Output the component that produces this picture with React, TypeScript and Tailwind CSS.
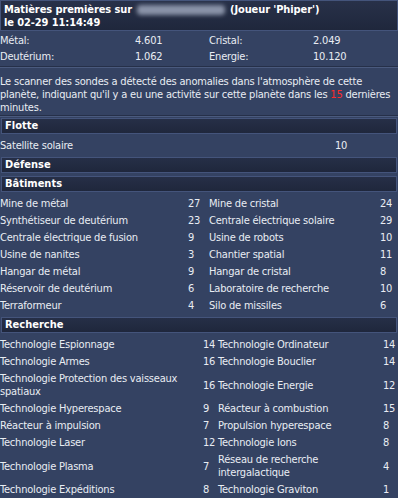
import React from 'react'

type Cell = { name: string; value: string }

const resources = [
  { a: 'Métal:', av: '4.601', b: 'Cristal:', bv: '2.049' },
  { a: 'Deutérium:', av: '1.062', b: 'Energie:', bv: '10.120' },
]

const buildings: Cell[][] = [
  [{ name: 'Mine de métal', value: '27' }, { name: 'Mine de cristal', value: '24' }],
  [{ name: 'Synthétiseur de deutérium', value: '23' }, { name: 'Centrale électrique solaire', value: '29' }],
  [{ name: 'Centrale électrique de fusion', value: '9' }, { name: 'Usine de robots', value: '10' }],
  [{ name: 'Usine de nanites', value: '3' }, { name: 'Chantier spatial', value: '11' }],
  [{ name: 'Hangar de métal', value: '9' }, { name: 'Hangar de cristal', value: '8' }],
  [{ name: 'Réservoir de deutérium', value: '6' }, { name: 'Laboratoire de recherche', value: '10' }],
  [{ name: 'Terraformeur', value: '4' }, { name: 'Silo de missiles', value: '6' }],
]

const research: Cell[][] = [
  [{ name: 'Technologie Espionnage', value: '14' }, { name: 'Technologie Ordinateur', value: '14' }],
  [{ name: 'Technologie Armes', value: '16' }, { name: 'Technologie Bouclier', value: '14' }],
  [{ name: 'Technologie Protection des vaisseaux spatiaux', value: '16' }, { name: 'Technologie Energie', value: '12' }],
  [{ name: 'Technologie Hyperespace', value: '9' }, { name: 'Réacteur à combustion', value: '15' }],
  [{ name: 'Réacteur à impulsion', value: '7' }, { name: 'Propulsion hyperespace', value: '8' }],
  [{ name: 'Technologie Laser', value: '12' }, { name: 'Technologie Ions', value: '8' }],
  [{ name: 'Technologie Plasma', value: '7' }, { name: 'Réseau de recherche intergalactique', value: '4' }],
  [{ name: 'Technologie Expéditions', value: '8' }, { name: 'Technologie Graviton', value: '1' }],
]

function SectionHead({ title, first }: { title: string; first?: boolean }) {
  return (
    <div
      className={`mx-[1px] mb-[3px] h-[16px] border border-[#44547b] bg-gradient-to-b from-[#262f47] to-[#1f273c] px-[3px] text-[11px] font-bold leading-[14px] tracking-normal text-white ${
        first ? 'mt-[1px]' : 'mt-[3px]'
      }`}
    >
      {title}
    </div>
  )
}

// bevelled rule between the report blocks
function Rule() {
  return <div className="h-[2px] border-t border-b border-t-[#263049] border-b-[#4a5a7e]" />
}

function StatGrid({ rows, cols }: { rows: Cell[][]; cols: string }) {
  return (
    <div className={`grid ${cols} items-center`}>
      {rows.map((r, i) => (
        <React.Fragment key={i}>
          <div className="py-[2px] leading-[13px]">{r[0].name}</div>
          <div className="py-[2px] leading-[13px]">{r[0].value}</div>
          <div className="py-[2px] leading-[13px]">{r[1].name}</div>
          <div className="py-[2px] leading-[13px]">{r[1].value}</div>
        </React.Fragment>
      ))}
    </div>
  )
}

export default function App() {
  return (
    <div
      className="h-[498px] w-[398px] overflow-hidden bg-[#344262] text-[11px] tracking-[-0.2px] text-[#e9edf3]"
      style={{ fontFamily: 'Tahoma, "DejaVu Sans Condensed", "DejaVu Sans", sans-serif' }}
    >
      {/* report title */}
      <div className="h-[31px] border border-[#44547b] bg-gradient-to-b from-[#283149] to-[#1f273c] px-[3px] pt-[2px] text-[11px] font-bold leading-[13px] tracking-[-0.1px] text-white">
        <div className="flex items-center">
          <span>Matières premières sur</span>
          <span className="ml-[5px] mr-[5px] inline-block h-[10px] w-[88px] rounded-sm bg-[#8a93a8] blur-[2px]" />
          <span>(Joueur 'Phiper')</span>
        </div>
        <div>le 02-29 11:14:49</div>
      </div>

      {/* resources */}
      <div className="grid grid-cols-[135px_74px_104px_1fr] pb-[1px] pt-[2px]">
        {resources.map((r) => (
          <React.Fragment key={r.a}>
            <div className="leading-[16px]">{r.a}</div>
            <div className="leading-[16px]">{r.av}</div>
            <div className="leading-[16px]">{r.b}</div>
            <div className="leading-[16px]">{r.bv}</div>
          </React.Fragment>
        ))}
      </div>
      <Rule />

      {/* activity notice */}
      <p className="pb-[1px] pt-[7px] leading-[13px]">
        Le scanner des sondes a détecté des anomalies dans l'atmosphère de cette planète, indiquant qu'il y a eu une activité sur cette planète dans les{' '}
        <span className="text-[#ff2a2a]">15</span> dernières minutes.
      </p>
      <Rule />

      <SectionHead title="Flotte" first />
      <div className="grid grid-cols-[335px_1fr]">
        <div className="py-[2px] leading-[13px]">Satellite solaire</div>
        <div className="py-[2px] leading-[13px]">10</div>
      </div>

      <SectionHead title="Défense" />
      <SectionHead title="Bâtiments" />
      <StatGrid rows={buildings} cols="grid-cols-[188px_21px_171px_1fr]" />

      <SectionHead title="Recherche" />
      <StatGrid rows={research} cols="grid-cols-[203px_15px_165px_1fr]" />
    </div>
  )
}
